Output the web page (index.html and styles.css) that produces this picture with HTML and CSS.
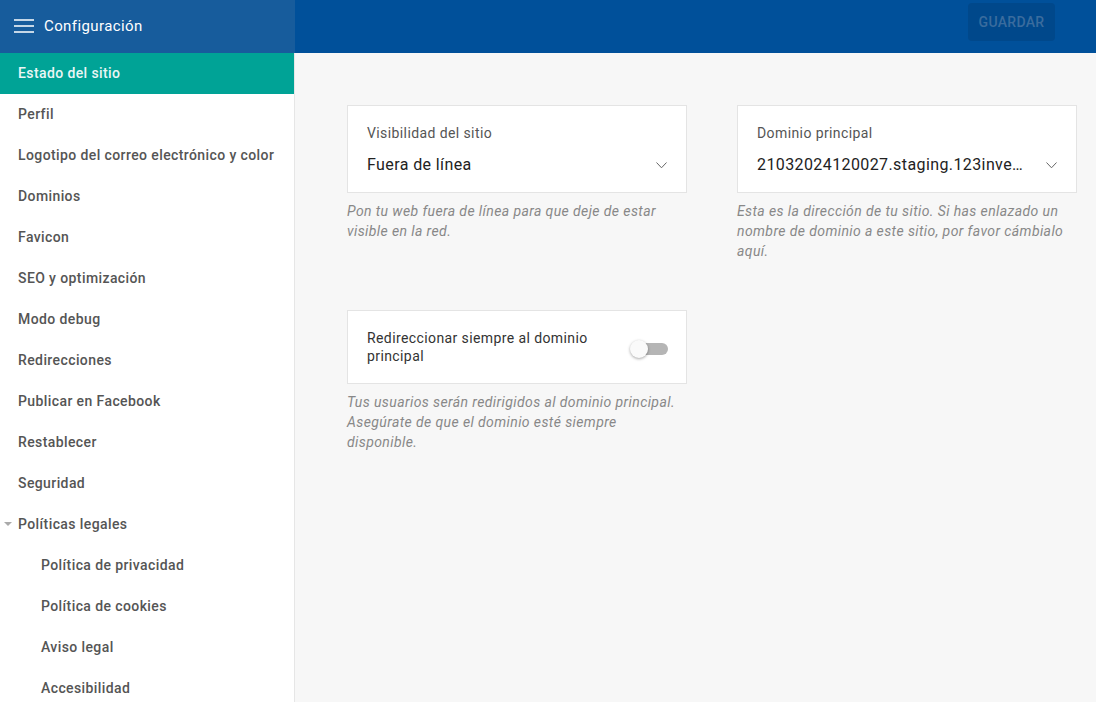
FILE: index.html
```html
<!DOCTYPE html>
<html lang="es">
<head>
<meta charset="utf-8">
<link rel="stylesheet" href="styles.css">
</head>
<body>
<div class="app">
  <aside class="sidebar">
    <div class="side-head">
      <svg class="burger" width="20" height="14" viewBox="0 0 20 14"><path d="M0 1h20M0 7h20M0 13h20" stroke="#fff" stroke-width="1.6"/></svg>
      <span class="title">Configuración</span>
    </div>
    <nav class="menu">
      <div class="item active">Estado del sitio</div>
      <div class="item">Perfil</div>
      <div class="item">Logotipo del correo electrónico y color</div>
      <div class="item">Dominios</div>
      <div class="item">Favicon</div>
      <div class="item">SEO y optimización</div>
      <div class="item">Modo debug</div>
      <div class="item">Redirecciones</div>
      <div class="item">Publicar en Facebook</div>
      <div class="item">Restablecer</div>
      <div class="item">Seguridad</div>
      <div class="item group"><span class="caret"></span>Políticas legales</div>
      <div class="item sub">Política de privacidad</div>
      <div class="item sub">Política de cookies</div>
      <div class="item sub">Aviso legal</div>
      <div class="item sub">Accesibilidad</div>
    </nav>
  </aside>
  <main class="main">
    <header class="topbar">
      <button class="save">GUARDAR</button>
    </header>
    <section class="content">
      <div class="field">
        <div class="card select">
          <div class="label">Visibilidad del sitio</div>
          <div class="value-row"><span class="value">Fuera de línea</span><svg class="chev" width="11" height="7" viewBox="0 0 11 7"><path d="M0.5 0.5L5.5 5.8L10.5 0.5" fill="none" stroke="#666" stroke-width="1"/></svg></div>
        </div>
        <p class="help">Pon tu web fuera de línea para que deje de estar visible en la red.</p>
      </div>
      <div class="field">
        <div class="card select">
          <div class="label">Dominio principal</div>
          <div class="value-row"><span class="value">21032024120027.staging.123inventatuweb.com</span><svg class="chev" width="11" height="7" viewBox="0 0 11 7"><path d="M0.5 0.5L5.5 5.8L10.5 0.5" fill="none" stroke="#666" stroke-width="1"/></svg></div>
        </div>
        <p class="help">Esta es la dirección de tu sitio. Si has enlazado un nombre de dominio a este sitio, por favor cámbialo aquí.</p>
      </div>
      <div class="field">
        <div class="card toggle-card">
          <div class="toggle-label">Redireccionar siempre al dominio principal</div>
          <div class="switch"><span class="knob"></span></div>
        </div>
        <p class="help">Tus usuarios serán redirigidos al dominio principal. Asegúrate de que el dominio esté siempre disponible.</p>
      </div>
    </section>
  </main>
</div>
</body>
</html>
```
FILE: styles.css
```css
* { box-sizing: border-box; }
html, body { margin: 0; padding: 0; height: 100%; }
body {
  font-family: Roboto, "Noto Sans", "Liberation Sans", sans-serif;
  letter-spacing: 0.4px;
  background: #f7f7f7;
  overflow: hidden;
}
.app { display: flex; height: 702px; }
.sidebar {
  width: 295px;
  flex: none;
  background: #fff;
  border-right: 1px solid #e6e6e6;
  display: flex;
  flex-direction: column;
}
.side-head {
  height: 53px;
  flex: none;
  background: #175c9c;
  display: flex;
  align-items: center;
  padding: 0 0 2px 14px;
  gap: 10px;
  margin-right: -1px;
}
.burger { display: block; }
.title { color: #fff; font-size: 15px; font-weight: 400; }
.menu { display: flex; flex-direction: column; }
.item {
  height: 41px;
  flex: none;
  display: flex;
  align-items: center;
  padding: 0 0 2px 18px;
  font-size: 14px;
  font-weight: 500;
  color: #555;
  position: relative;
}
.item.active { background: #00a396; color: #eaf6f5; }
.item.sub { padding-left: 41px; }
.caret {
  position: absolute;
  left: 4px;
  top: 18px;
  width: 0; height: 0;
  border-left: 4px solid transparent;
  border-right: 4px solid transparent;
  border-top: 4px solid #aaa;
}
.main { flex: 1; display: flex; flex-direction: column; }
.topbar {
  height: 53px;
  flex: none;
  background: #00509a;
  display: flex;
  justify-content: flex-end;
  align-items: flex-start;
  padding: 3px 41px 0 0;
}
.save {
  width: 87px;
  height: 38px;
  border: none;
  border-radius: 4px;
  background: #00488b;
  color: #3a6c9e;
  font-family: inherit;
  letter-spacing: 0.3px;
  font-size: 14px;
  font-weight: 500;
}
.content {
  display: grid;
  grid-template-columns: 340px 340px;
  column-gap: 50px;
  row-gap: 49px;
  padding: 52px 0 0 52px;
  align-content: start;
}
.card {
  background: #fff;
  border: 1px solid #e4e4e4;
}
.select { height: 88px; padding: 18px 19px 0 19px; }
.label { font-size: 14px; color: #555; line-height: 18px; }
.value-row {
  display: flex;
  align-items: center;
  margin-top: 13px;
  gap: 20px;
}
.value {
  flex: 1;
  font-size: 16px;
  color: #222;
  white-space: nowrap;
  overflow: hidden;
  text-overflow: ellipsis;
  line-height: 20px;
}
.chev { flex: none; margin-right: 0; }
.help {
  margin: 8px 0 0 0;
  font-size: 14px;
  font-style: italic;
  color: #888;
  line-height: 20px;
}
.toggle-card {
  height: 74px;
  display: flex;
  align-items: center;
  padding: 0 18px 0 19px;
  justify-content: space-between;
}
.toggle-label {
  width: 240px;
  font-size: 14px;
  color: #333;
  line-height: 18px;
}
.switch {
  width: 36px;
  height: 12px;
  border-radius: 6px;
  background: #b5b5b5;
  position: relative;
  margin-top: 4px;
}
.knob {
  position: absolute;
  left: -2px;
  top: -3px;
  width: 18px;
  height: 18px;
  border-radius: 50%;
  background: #fafafa;
  box-shadow: 0 1px 3px rgba(0,0,0,0.35);
}
```
